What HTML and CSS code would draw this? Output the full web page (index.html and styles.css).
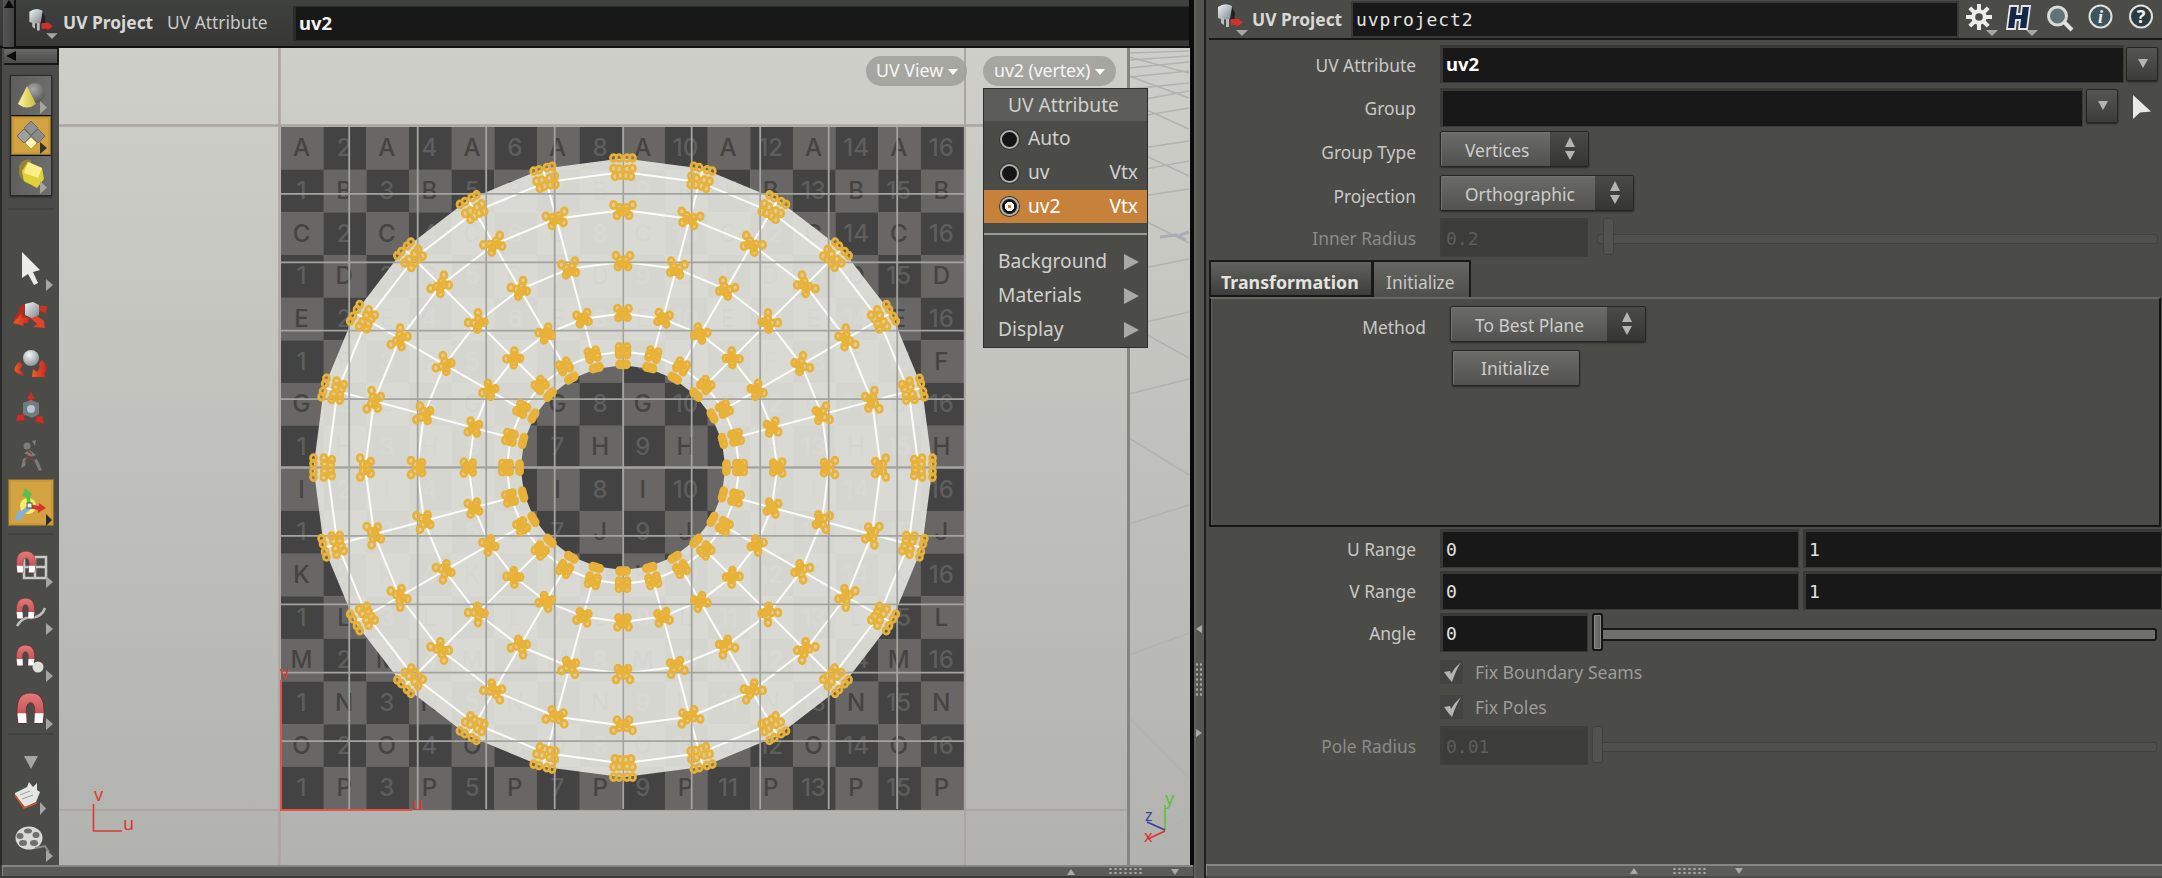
FILE: index.html
```html
<!DOCTYPE html>
<html lang="en">
<head>
<meta charset="utf-8">
<title>UV Project</title>
<link rel="stylesheet" href="styles.css">
</head>
<body>
<svg width="0" height="0" class="defs">
  <defs>
    <linearGradient id="red" x1="0" y1="0" x2="0" y2="1"><stop offset="0" stop-color="#e37a7a"/><stop offset="1" stop-color="#bd4448"/></linearGradient>
    <linearGradient id="arrowRed" x1="0" y1="0" x2="1" y2="0"><stop offset="0" stop-color="#ef5f22"/><stop offset="1" stop-color="#cc2420"/></linearGradient>
    <linearGradient id="metal" x1="0" y1="0" x2="1" y2="1"><stop offset="0" stop-color="#f2f5f6"/><stop offset="1" stop-color="#7d868b"/></linearGradient>
    <linearGradient id="cone" x1="0" y1="0" x2="1" y2="0"><stop offset="0" stop-color="#fff6a0"/><stop offset="1" stop-color="#c9bb3c"/></linearGradient>
    <radialGradient id="ball" cx=".4" cy=".3" r=".8"><stop offset="0" stop-color="#f6f8f9"/><stop offset="1" stop-color="#7c868c"/></radialGradient>
    <radialGradient id="grayball" cx=".4" cy=".3" r=".7"><stop offset="0" stop-color="#a9a9a9"/><stop offset="1" stop-color="#5a5a5a"/></radialGradient>
    <symbol id="node" viewBox="0 0 34 34">
      <path d="M2 5 Q9 0 16 4 V16 Q9 19 2 16Z" fill="url(#metal)"/>
      <path d="M16 5 L19 11 L18 20 L14 17Z" fill="#222"/>
      <path d="M5 16 H8 V23 L5 21Z M10 17 H13 V25 H10Z" fill="#b9bcbd"/>
      <path d="M15 17 H21 V16 L27 20.500 L21 25 V23 H15Z" fill="#d3302a"/>
      <path d="M20 28 H32 L26 34Z" fill="#a7a7a4"/>
    </symbol>
    <symbol id="magnet" viewBox="0 0 32 36">
      <path d="M3 34 C1 18 1 3 16 3 S31 18 29 34 H20 C21 22 21 13 16 13 S11 22 12 34Z" fill="url(#red)" stroke="#6b2a2c" stroke-width=".8"/>
      <path d="M2.500 24 H11.500 L12 34 H3.500Z M20.500 24 H29.500 L28.500 34 H20Z" fill="#fff"/>
    </symbol>
    <symbol id="gear" viewBox="0 0 26 26">
      <g stroke="#ecece8" stroke-width="4"><path d="M13 0V8 M13 18V26 M0 13H8 M18 13H26 M3.800 3.800L9.500 9.500 M16.500 16.500L22.200 22.200 M22.200 3.800L16.500 9.500 M3.800 22.200L9.500 16.500"/></g>
      <circle cx="13" cy="13" r="5.800" fill="none" stroke="#ecece8" stroke-width="4"/>
    </symbol>
  </defs>
</svg>
<div class="app">
  <section class="left">
    <header class="opbar">
      <div class="vscroll"><svg width="12" height="12"><path d="M1 8L6 0L11 8Z" fill="#0a0a0a"/></svg></div>
      <svg class="nodeicon" width="34" height="34"><use href="#node"/></svg>
      <b class="optitle">UV Project</b>
      <span class="oplabel">UV Attribute</span>
      <div class="opfield">uv2</div>
    </header>
    <div class="work">
      <nav class="tools">
        <div class="collapse"><svg width="14" height="12"><path d="M12 1V11L2 6Z" fill="#0a0a0a"/></svg></div>
        <div class="toolgroup">
          <svg class="tg" width="39" height="39"><circle cx="24" cy="17" r="10" fill="url(#grayball)"/><path d="M16 10L7 28Q16 35 25 28Z" fill="url(#cone)"/><path d="M29 25V38L36 31.500Z" fill="#a5a5a2"/></svg>
          <svg class="tg on" width="39" height="39"><g stroke="#6b6b6b" stroke-width="1"><path d="M20 5L27 12L20 19L13 12Z" fill="#8f9090"/><path d="M13 13L20 20L13 27L6 20Z" fill="#9fa0a0"/><path d="M27 13L34 20L27 27L20 20Z" fill="#8a8b8b"/><path d="M20 21L26 27L20 33L14 27Z" fill="#fdf6c0" stroke="#c3a52e"/></g><path d="M29 26V38L36 32Z" fill="#333"/></svg>
          <svg class="tg" width="39" height="39"><path d="M8 10Q12 2 20 4L20 28Q12 28 8 18Z" fill="#b59b1f" opacity=".6"/><path d="M17 6L31 12L33 23L26 32L13 25L11 15Z" fill="#e0d238"/><path d="M17 6L31 12L27 22L13 17Z" fill="#f8ef88"/><path d="M29 25V38L36 31.500Z" fill="#a5a5a2"/></svg>
        </div>
        <i class="sep s1"></i>
        <svg class="t t-arrow" width="52" height="53"><path d="M19 10V36L25 32L31 43L35 41L30 30L37 28Z" fill="#ecece9"/><path d="M43 37V49L50 43Z" fill="#a5a5a2"/></svg>
        <svg class="t" width="52" height="48"><path d="M21 9L25 11L20 19L23 22L12 30L11 24L16 17L16 13Z" fill="#b9291f"/><path d="M35 11L44 11L43 19L38 16L32 20Z" fill="#c93426"/><path d="M25 21L33 20L41 26L42 33L30 32L34 29Z" fill="#e0452a"/><path d="M10 28L18 19L19 23L27 22L25 28L20 28L21 31Z" fill="url(#arrowRed)"/><path d="M22 9L30 7L36 10V20L29 23L22 20Z" fill="url(#metal)"/></svg>
        <svg class="t" width="52" height="48"><path d="M16 19Q8 26 14 30Q18 32 21 33L20 30Q14 27 20 22Z" fill="url(#arrowRed)"/><path d="M39 17Q47 25 41 31L43 34L29 34L30 26L34 29Q38 25 36 21Z" fill="url(#arrowRed)"/><circle cx="28" cy="15" r="8" fill="url(#ball)"/></svg>
        <svg class="t" width="52" height="44"><path d="M28 1L32 8H29.500V15H26.500V8H24Z M25 22L20 26L24 29L13 30L15 23L18 24Z M31 22L36 26L39 24L41 33L31 30L34 28Z" fill="#d32a24"/><path d="M20 12L28 9L36 12V23L29 27L20 23Z" fill="#76868c" opacity=".85"/><circle cx="28" cy="18" r="4" fill="#b9c6cb"/></svg>
        <svg class="t" width="52" height="45"><g fill="#7c7d7b"><circle cx="24" cy="11" r="3.500"/><path d="M29 6L33 5L32 11Z M21 18L27 15L33 20L28 22Z M20 24L24 22L22 31L18 33Z M31 25L34 24L39 35L36 36Z"/></g><path d="M24 15L29 19 M27 21L31 26 M25 22L22 27" stroke="#8e3a36" stroke-width="1.600"/></svg>
        <svg class="t on big" width="46" height="47"><circle cx="20" cy="27" r="8" fill="#f3ef6a"/><path d="M20 26L18 18L14 17L17 9L24 15L22 18L23 26Z" fill="#5bc04a"/><path d="M21 25L31 27L31 24L38 29L30 34V31L21 29Z" fill="#d63030"/><path d="M21 26L12 33L10 31L7 42L16 39L14 37L23 30Z" fill="#7fb0df"/><rect x="19" y="24" width="5" height="5" fill="#eee" stroke="#555"/><path d="M38 35V47L44 41Z" fill="#2d2d2b"/></svg>
        <i class="sep s2"></i>
        <svg class="t m1" width="52" height="47"><g fill="none" stroke="#c7cbc8" stroke-width="2.500"><rect x="21" y="15" width="22" height="21"/><path d="M32 15V36M21 25H43"/></g><use href="#magnet" x="12" y="7" width="22" height="25"/><path d="M43 34V46L50 40Z" fill="#a5a5a2"/></svg>
        <svg class="t" width="52" height="47"><path d="M14 37Q20 27 28 29Q39 28 42 19" fill="none" stroke="#b9bfbc" stroke-width="2.500"/><use href="#magnet" x="12" y="7" width="21" height="24"/><path d="M43 34V46L50 40Z" fill="#a5a5a2"/></svg>
        <svg class="t" width="52" height="47"><use href="#magnet" x="12" y="7" width="21" height="24"/><circle cx="35" cy="31" r="5.500" fill="#dededa"/><path d="M43 34V46L50 40Z" fill="#a5a5a2"/></svg>
        <svg class="t" width="52" height="50"><use href="#magnet" x="12" y="7" width="31" height="35"/><path d="M43 35V47L50 41Z" fill="#a5a5a2"/></svg>
        <i class="sep s3"></i>
        <svg class="t tri" width="52" height="37"><path d="M21 16H35L28 29Z" fill="#a5a5a2"/></svg>
        <svg class="t" width="52" height="48"><path d="M12 16L24 10L26 5L30 10L34 6V13L37 15L33 25L22 30L12 18Z" fill="#e4e6e4"/><path d="M12 18L21 31L34 26" fill="none" stroke="#d0552b" stroke-width="1.500"/><path d="M17 18L27 14M19 22L30 18" stroke="#98a0a0"/><path d="M37 25V38L43 31.500Z" fill="#a5a5a2"/></svg>
        <svg class="t" width="52" height="42"><ellipse cx="26" cy="13" rx="13.500" ry="11.500" fill="#d9dad6"/><g fill="#6f706c"><ellipse cx="25" cy="6" rx="4" ry="2.500"/><ellipse cx="17" cy="11" rx="3.500" ry="3"/><ellipse cx="33" cy="10" rx="3.500" ry="3"/><ellipse cx="20" cy="18" rx="4" ry="3"/><ellipse cx="31" cy="18" rx="4" ry="3"/></g><path d="M32 23L42 21L46 27" fill="none" stroke="#8c8d89" stroke-width="2"/><path d="M43 25V37L50 31Z" fill="#a5a5a2"/></svg>
      </nav>
      <main class="viewport">
        <svg id="canvas" width="1131" height="817" viewBox="59 48 1131 817"></svg>
        <div class="pill p1">UV View<i></i></div>
        <div class="pill p2">uv2 (vertex)<i></i></div>
        <div class="menu">
          <div class="mtitle">UV Attribute</div>
          <div class="mi"><i class="radio"></i>Auto</div>
          <div class="mi"><i class="radio"></i>uv<span>Vtx</span></div>
          <div class="mi sel"><i class="radio"></i>uv2<span>Vtx</span></div>
          <hr>
          <div class="mi sub">Background<em></em></div>
          <div class="mi sub">Materials<em></em></div>
          <div class="mi sub">Display<em></em></div>
        </div>
      </main>
    </div>
    <footer class="bar lbar"><i class="up"></i><i class="dots"></i><i class="down"></i></footer>
  </section>
  <div class="split"><i class="lt"></i><i class="vdots"></i><i class="rt"></i></div>
  <section class="right">
    <header class="phead">
      <svg class="nodeicon" width="34" height="34"><use href="#node"/></svg>
      <b class="optitle">UV Project</b>
      <div class="name">uvproject2</div>
      <svg class="pi" width="203" height="38" viewBox="1959 0 203 38">
        <use href="#gear" x="1966" y="4" width="26" height="26"/><path d="M1986 30H1998L1992 36Z M2026 30H2038L2032 36Z" fill="#a7a7a4"/>
        <path d="M2010 6H2018L2017 14H2021L2022 6H2030L2027 29H2019L2020 20H2016L2015 29H2007Z" fill="#16264a" stroke="#e6e8ea" stroke-width="1.800"/>
        <circle cx="2057.500" cy="16" r="9" fill="#5f7478" stroke="#d9dbd8" stroke-width="3"/><path d="M2064 22L2072 30" stroke="#e2e3df" stroke-width="4"/>
        <circle cx="2100.500" cy="16.500" r="11" fill="#40525a" stroke="#dfe1de" stroke-width="2"/><text x="2100.500" y="22.500" class="ii">i</text>
        <circle cx="2141" cy="16.500" r="11" fill="#2d3a40" stroke="#dfe1de" stroke-width="2"/><text x="2141" y="23" class="iq">?</text>
      </svg>
    </header>
    <div class="row r1"><label>UV Attribute</label><div class="f bold w684">uv2</div><div class="dd"></div></div>
    <div class="row r2"><label>Group</label><div class="f w643"></div><div class="dd d2"></div><svg class="pick" width="20" height="26"><path d="M1 1V25L8 18.500L19 17.500Z" fill="#e9e9e6"/></svg></div>
    <div class="row r3"><label>Group Type</label><div class="combo c1">Vertices<span></span></div></div>
    <div class="row r4"><label>Projection</label><div class="combo c2">Orthographic<span></span></div></div>
    <div class="row r5 off"><label>Inner Radius</label><div class="f w148">0.2</div><div class="slider s-in"><i></i></div></div>
    <div class="tabs"><div class="tab act">Transformation</div><div class="tab">Initialize</div></div>
    <div class="folder">
      <div class="row r6"><label>Method</label><div class="combo c3">To Best Plane<span></span></div></div>
      <div class="btn">Initialize</div>
    </div>
    <div class="row r7"><label>U Range</label><div class="f half">0</div><div class="f half">1</div></div>
    <div class="row r8"><label>V Range</label><div class="f half">0</div><div class="f half">1</div></div>
    <div class="row r8"><label>Angle</label><div class="f w148">0</div><div class="slider"><i></i></div></div>
    <div class="check k1"><svg width="23" height="24"><path d="M4 12L10 11L11 14Q15 7 21 2Q16 10 12 22Q8 18 4 12Z" fill="#b4b4b1"/></svg>Fix Boundary Seams</div>
    <div class="check k2"><svg width="23" height="24"><path d="M4 12L10 11L11 14Q15 7 21 2Q16 10 12 22Q8 18 4 12Z" fill="#b4b4b1"/></svg>Fix Poles</div>
    <div class="row r9 off"><label>Pole Radius</label><div class="f w148">0.01</div><div class="slider"><i></i></div></div>
    <footer class="bar rbar"><i class="up"></i><i class="dots"></i><i class="down"></i></footer>
  </section>
</div>
<script src="canvas.js"></script>
</body>
</html>
```
FILE: styles.css
```css
*{box-sizing:border-box}
body{margin:0;background:#3a3a39;overflow:hidden;font-family:"Noto Sans","Open Sans",sans-serif;font-size:17.4px;color:#c9c9c6;line-height:1}
.defs{position:absolute}
svg{display:block;flex:none}
.app{display:flex;width:2162px;height:878px}
.left{width:1194px;display:flex;flex-direction:column;background:#3a3a39}
.opbar{height:48px;display:flex;align-items:center;padding-left:3px;border-bottom:2px solid #111;border-right:5px solid #0c0c0c;background:linear-gradient(#3f413f,#373736)}
.vscroll{width:13px;height:47px;background:linear-gradient(90deg,#555,#444);border-right:2px solid #111;margin-right:3px}
.opbar .nodeicon{margin:0 2px 0 8px;width:33px;height:32px}
.opbar .optitle{width:105px;color:#d8d8d5;padding-left:1px}
.oplabel{width:126px}
.opfield{flex:1;height:35px;background:#181818;border:1px solid #2b2b2a;border-left-width:3px;border-right:0;padding:7px 3px;color:#f2f2f0;font-weight:bold;font-size:18.5px}
.work{display:flex;height:817px;border-right:4px solid #0a0a0a}
.tools{width:59px;padding-left:2px;background:#4b4b48;border-left:2px solid #2a2a29;flex:none}
.collapse{height:17px;width:55px;border:solid #191919;border-width:1px 2px 2px 0;background:linear-gradient(#6a6a68,#4c4c4a);padding-top:1px}
.toolgroup{width:42px;height:121px;margin:10px 0 0 6px;border:1px solid #2a2a28;border-bottom-width:2px;background:#111;display:grid;gap:1px;box-shadow:0 1px 2px #222}
.tg{background:linear-gradient(100deg,#5d5d5c,#6f6f6d);width:40px}
.tg.on,.t.on{background:#d2a340;box-shadow:inset 0 0 0 1px #8a6d33,inset 0 0 0 3px #c89a3a}
.sep{display:block;height:2px;width:46px;margin-left:4px;background:#424240}
.s1{margin-top:12px}
.t{margin-left:-1px}
.t-arrow{margin-top:32px}
.t.big{margin:-1px 0 0 4px}
.s2{margin-top:7px}
.m1{margin-top:7px}
.tri{margin-top:5px}
.viewport{position:relative;width:1131px;flex:none}
.pill{position:absolute;top:8px;height:30px;border-radius:15px;background:rgba(158,157,153,.82);color:#f4f4f2;display:flex;align-items:center;font-size:17.8px;padding-bottom:1px}
.pill i{border:5.500px solid transparent;border-top:6px solid #fff;border-bottom:0;margin:3px 0 0 5px}
.p1{left:807px;width:101px;padding-left:10px}
.p2{left:924px;width:133px;padding-left:11px;letter-spacing:-.1px}
.menu{position:absolute;left:924px;top:40px;width:165px;height:260px;background:#4b4b48;border:1px solid #2d2d2c;font-size:19.2px;color:#d0d0cd}
.mtitle{height:32px;background:#5c5c58;padding:5px 0 0 24px;line-height:22px}
.mi{height:34px;display:flex;align-items:center;padding:0 9px 2px 16px;line-height:28px}
.mtitle+.mi{margin-top:1px}
.mi span{margin-left:auto}
.mi .radio{width:19px;height:19px;border-radius:50%;background:#151515;border:2px solid #aeaeab;box-shadow:0 0 0 1px #333;margin:2px 9px 0 0}
.mi.sel{background:#c6813a;color:#fff;height:33px}
.sel .radio{background:radial-gradient(circle,#c6813a 1.500px,#fff 2px 4.500px,#151515 5px)}
.menu hr{margin:10px 0;border:0;height:2px;background:#999996}
.mi.sub{padding-left:14px;padding-right:8px}
.mi em{margin-left:auto;border:8px solid transparent;border-left:15px solid #a9a9a6;border-right:0;margin-top:2px}
.bar{display:flex;align-items:center;background:#5b5b57;border:2px solid #858581;border-width:2px 0 0 1px}
.lbar{height:11px;width:1191px;margin-left:2px;padding-left:1064px}
.bar .up,.bar .down{border:4px solid transparent;border-bottom:6px solid #aaa;border-top:0}
.bar .down{border-top:6px solid #aaa;border-bottom:0}
.bar .dots{width:35px;height:9px;margin:0 28px 0 33px;background:radial-gradient(circle,#aaa 1px,transparent 1.300px) 0 0/5px 4px}
.split{width:12px;background:#555552;border-left:2px solid #60605d;border-right:2px solid #222;padding-top:625px;flex:none}
.split i{display:block;margin-left:0}
.lt{border:4.500px solid transparent;border-right:6px solid #aaa;border-left:0;width:0}
.rt{border:4.500px solid transparent;border-left:6px solid #aaa;border-right:0;width:0}
.split .vdots{height:35px;width:9px;margin:29px 0 32px -1px;background:radial-gradient(circle,#aaa 1px,transparent 1.300px) 0 0/4px 5px}
.right{width:956px;background:#4b4b48;display:flex;flex-direction:column}
.phead{height:40px;display:flex;align-items:center;border-bottom:2px solid #191918;margin-left:3px;padding-left:7px;flex:none}
.phead .optitle{width:101px;padding:2px 0 0 2px;color:#d8d8d5}
.name,.f{font-family:"DejaVu Sans Mono",monospace;font-size:18px;color:#e4e4e2}
.name{width:608px;height:37px;background:#181818;border:2px solid #3a3a38;padding:8px 3px;letter-spacing:.9px}
.ii,.iq{font:italic bold 18px "Liberation Serif",serif;fill:#f0f0ee;text-anchor:middle}
.iq{font:bold 18px "Noto Sans",sans-serif}
.row{display:flex;flex:none;height:39px}
.row label{width:210px;margin-right:24px;text-align:right;padding-top:12px;height:39px;flex:none}
.row .f{height:39px;background:#181818;border:solid #393937;border-width:3px 1px 1px 3px;padding:9px 3px;flex:none}
.row .bold{font:bold 18.500px/1 "Noto Sans",sans-serif;color:#fff;padding:7px 3px;height:38px}
.w684{width:684px}.w643{width:643px}.w148{width:148px}
.half{width:359px;margin-right:4px}
.r1{margin-top:5px;height:38px}
.r2{margin-top:5px}
.dd{width:32px;height:34px;margin:2px 0 0 2px;border:1px solid #252524;border-radius:2px;box-shadow:0 1px 2px #222;background:linear-gradient(#555552,#3c3c3a);padding:11px 0 0 11px}
.dd::after{content:"";display:block;width:0;border:5.500px solid transparent;border-top:9px solid #b4b4b1;border-bottom:0}
.d2{margin:1px 0 0 3px}
.pick{margin:6px 0 0 14px}
.combo,.btn{height:36px;border:1px solid #262625;border-radius:2px;background:linear-gradient(#6b6b68,#525250);box-shadow:0 1px 2px #2a2a28,inset 1px 1px 0 #747471;position:relative;color:#cdcdca;padding:10px 0 0 24px;white-space:nowrap}
.combo span{position:absolute;right:0;top:0;width:38px;height:34px;background:linear-gradient(#4a4a48,#353533)}
.combo span::before,.combo span::after{content:"";position:absolute;left:15px;top:5px;border:5.500px solid transparent;border-bottom:10px solid #b4b4b1;border-top:0}
.combo span::after{top:19px;border-bottom:0;border-top:9px solid #b4b4b1}
.c1{width:149px}.c2{width:194px}.c3{width:196px}
.r3{margin-top:4px;height:36px}
.r4{margin-top:8px;height:36px}
.r3 label,.r4 label,.r6 label{padding-top:13px}
.r5{margin-top:7px}
.off{color:#8c8c89}
.off .f{background:#3c3c3a;border-color:#3e3e3c;color:#5e5e5b}
.slider{position:relative;flex:none;width:565px;margin-left:4px;height:38px}
.slider::before{content:"";position:absolute;left:5px;right:0;top:15px;height:9px;border:2px solid #181817;border-radius:3px;background:#70706d}
.slider i{position:absolute;left:0;top:0;width:11px;height:38px;border:2px solid #161615;border-radius:3px;background:linear-gradient(90deg,#777,#60605e);box-shadow:inset 0 0 0 1px #8a8a87}
.off .slider::before{border:1px solid #414140;background:#50504d;height:8px;top:16px}
.off .slider i{border:1px solid #40403e;background:#52524f;box-shadow:none;height:37px}
.s-in{width:561px;margin-left:9px}.s-in::before{left:0!important}.s-in i{left:6px}
.tabs{display:flex;height:37px;margin:3px 0 0 3px;flex:none}
.tab{height:37px;border:2px solid #191918;border-bottom:0;background:linear-gradient(#666663,#4e4e4b);padding:12px 0 0 12px;width:99px}
.tab.act{width:164px;margin-right:-1px;border-bottom:2px solid #191918;background:linear-gradient(#62625f,#3d3d3b);color:#e2e2df;font-weight:bold;padding-left:10px;font-size:17.8px}
.folder{height:230px;margin-left:3px;width:952px;border:2px solid #151514;border-top:2px solid #666663;box-shadow:inset 1px 0 0 #5d5d5a;flex:none}
.r6{margin-top:7px;height:36px}
.row.r6 label{width:215px;margin-right:24px}
.btn{width:128px;margin:8px 0 0 241px;padding:9px 0 0 28px}
.r7{margin-top:2px}.r8{margin-top:3px}
.check{display:flex;align-items:center;height:24px;margin-left:234px;color:#9c9c99;flex:none;padding-top:1px;font-size:17.6px}
.check svg{background:#434341;margin:-1px 12px 0 0}
.k1{margin-top:8px}.k2{margin-top:11px}
.r9{margin-top:7px}
.rbar{height:12px;margin-top:99px;padding-left:423px;flex:none}
.rbar .dots{margin:0 28px 0 34px}
#canvas{background:linear-gradient(#cfcfca,#b2b2ae)}
.ch{font:500 24px Inter,Lato,sans-serif;text-anchor:middle}
.ax{font:18px "Noto Sans",sans-serif;fill:#dc3a34}
.small{font-size:16px}
```
FILE: canvas.js
```js
const NS = 'http://www.w3.org/2000/svg';
const svg = document.getElementById('canvas');
function add(tag, attrs, text) {
  const e = document.createElementNS(NS, tag);
  for (const k in attrs) e.setAttribute(k, attrs[k]);
  if (text !== undefined) e.textContent = text;
  svg.appendChild(e);
  return e;
}
function line(x1, y1, x2, y2, stroke, w) {
  add('path', { d: `M${x1} ${y1}L${x2} ${y2}`, stroke, 'stroke-width': w, fill: 'none' });
}

// unit tile borders
line(279.500, 48, 279.500, 865, '#aaa5a1', 2.5);
line(965, 48, 965, 865, '#aaa5a1', 2);
line(59, 125.500, 1128, 125.500, '#aaa5a1', 2.5);
line(59, 810, 1128, 810, '#aaa5a1', 2);

// perspective floor grid; each pair is y at the left and right edge of the strip
const floor = [
  [53, 51], [60, 56], [68, 62], [77, 71], [89, 83], [102, 91], [118, 108], [150, 141], [172, 161],
  [198, 189], [271, 259], [326, 312], [394, 379], [524, 505], [655, 633], [847, 817],
  [57, 73], [76, 98], [102, 129], [148, 176], [213, 243], [325, 358], [438, 475], [717, 778]
];
floor.forEach(([a, b]) => line(1129, a, 1189, b, '#b2b2b0', 1.5));
add('path', { d: 'M1160 237L1176 235L1186 240M1180 235L1189 232', stroke: '#a8abb6', 'stroke-width': 3, fill: 'none' });
line(1128.500, 48, 1128.500, 865, '#858580', 3);

// checker texture with row letters and column numbers
const X0 = 281, Y0 = 127, C = 42.66, CX = 623, CY = 467.700;
for (let r = 0; r < 16; r++) for (let c = 0; c < 16; c++) {
  const light = (r + c) % 2 === 0;
  add('rect', { x: X0 + c * C, y: Y0 + r * C, width: C + .3, height: C + .3, fill: light ? '#686765' : '#434343' });
  add('text', { x: X0 + (c + .48) * C, y: Y0 + (r + .5) * C + 8, class: 'ch', fill: light ? '#444443' : '#5e5e5d' },
    light ? String.fromCharCode(65 + r) : c + 1);
}

// torus seen along its axis
const radii = [309.5, 295.7, 257.8, 206, 154.2, 116.3, 102.4];
const pt = (rad, i, t = 0) => {
  const a = i * Math.PI / 12;
  return [CX + rad * Math.sin(a) + t * Math.cos(a), CY - rad * Math.cos(a) + t * Math.sin(a)];
};
const loop = rad => 'M' + Array.from({ length: 24 }, (_, i) => pt(rad, i).map(v => v.toFixed(1)).join(' ')).join('L') + 'Z';
add('path', { d: loop(radii[0]) + loop(radii[6]), 'fill-rule': 'evenodd', fill: '#e8e9e3', 'fill-opacity': .89 });
for (let k = 1; k < 6; k++) add('path', { d: loop(radii[k]), fill: 'none', stroke: '#fcfcfa', 'stroke-width': 2 });
for (let i = 0; i < 24; i++) {
  const a = pt(radii[0], i), b = pt(radii[5], i);
  line(a[0], a[1], b[0], b[1], '#fcfcfa', 2);
}

// tenth subdivisions
for (let k = 1; k < 10; k++) {
  const x = 280.700 + k * 68.5, y = 125.500 + k * 68.4;
  line(x, 127, x, 809, '#a3a39f', 1.8);
  line(281, y, 964, y, '#a3a39f', k === 5 ? 2.6 : 1.8);
}

// vertex markers: [tangential, radial] offsets, mirrored on both sides of the spoke
const marks = [
  [[4, 0], [9.5, 0]],
  [[9.5, 3.5], [4, 3], [8, -4.5], [3, -3.5]],
  [[9.5, 5], [3.5, 2], [6, -5.5], [3, -2]],
  [[7, 6], [3, 1.5], [5, -5], [2, -3]],
  [[5.5, 5], [2, 2], [4.5, -4], [2, -2]],
  [[4, 4.5], [4, 0], [4, -3], [1, 2]],
  [[3.5, 1], [1.5, 1]]
];
let d = '';
for (let i = 0; i < 24; i++) marks.forEach((m, k) => m.forEach(([t, r]) => [-1, 1].forEach(s => {
  const [x, y] = pt(radii[k] + r, i, t * s);
  d += `M${(x - 3).toFixed(1)} ${y.toFixed(1)}a3 3.500 0 1 0 6 0a3 3.500 0 1 0 -6 0`;
})));
add('path', { d, fill: '#e8b238', 'fill-opacity': .3, stroke: '#e8b238', 'stroke-width': 2.7 });

// axis gnomons
add('path', { d: 'M281 680V810H412', fill: 'none', stroke: '#e5504a', 'stroke-width': 2 });
add('path', { d: 'M93.500 804V831H122', fill: 'none', stroke: '#dc3a34', 'stroke-width': 1.6 });
add('text', { x: 280, y: 679, class: 'ax' }, 'v');
add('text', { x: 412, y: 810, class: 'ax' }, 'u');
add('text', { x: 94, y: 801, class: 'ax' }, 'v');
add('text', { x: 123, y: 830, class: 'ax' }, 'u');
line(1165, 830, 1165, 805, '#6abf4b', 1.8);
line(1165, 830, 1147, 822, '#3c3c9e', 1.8);
line(1165, 831, 1148, 839, '#d33', 1.8);
add('text', { x: 1165, y: 805, class: 'ax', style: 'fill:#5cbf3c' }, 'y');
add('text', { x: 1145, y: 821, class: 'ax small', style: 'fill:#3c3c9e' }, 'z');
add('text', { x: 1144, y: 842, class: 'ax small', style: 'fill:#d33' }, 'x');
```
